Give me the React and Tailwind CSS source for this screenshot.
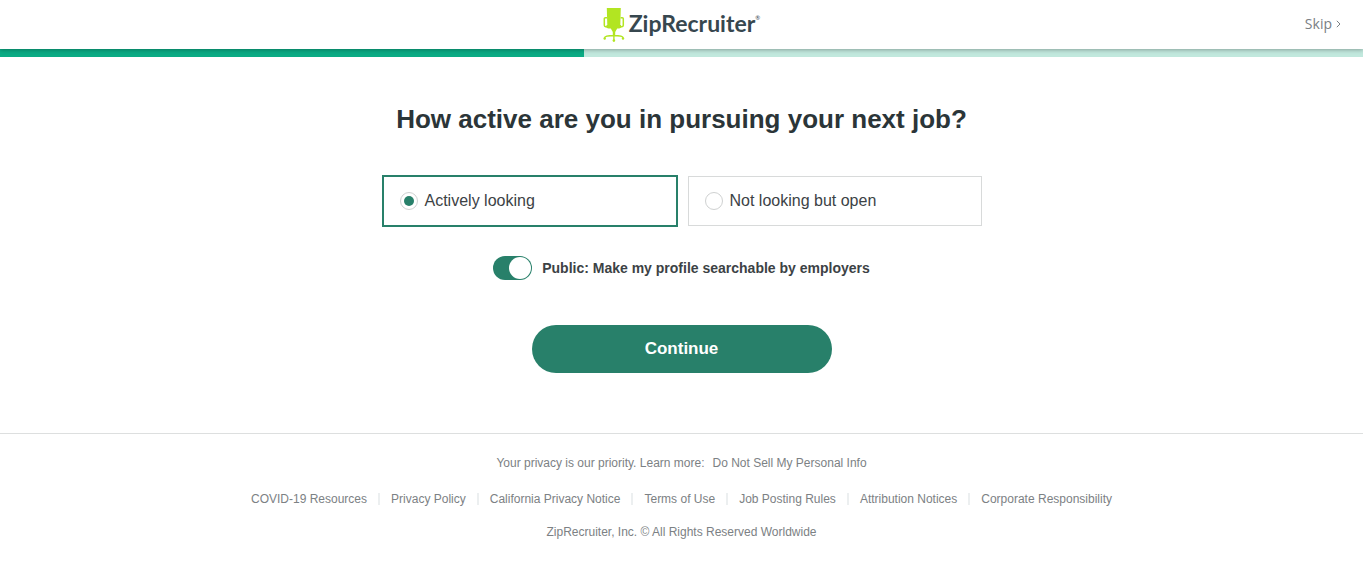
import { useState } from "react";

const ACTIVITY_OPTIONS = [
  { value: "active", label: "Actively looking" },
  { value: "open", label: "Not looking but open" },
];

const FOOTER_LINKS = [
  "COVID-19 Resources",
  "Privacy Policy",
  "California Privacy Notice",
  "Terms of Use",
  "Job Posting Rules",
  "Attribution Notices",
  "Corporate Responsibility",
];

function ChairIcon() {
  return (
    <svg width="22" height="34" viewBox="0 0 22 34" fill="none" aria-hidden="true">
      {/* Back and seat */}
      <path d="M3.8 0h14l-.5 17.5H4.3z" fill="#b2e522" />
      <path d="M3.500 17h14.600v1.800c0 1.200-.8 1.700-2 1.700h-1.900L12.200 24v4h-2.400v-4l-2-3.500H5.500c-1.200 0-2-.5-2-1.700z" fill="#b2e522" />
      {/* Armrests */}
      <path d="M4 9.700H2.300c-.6 0-1 .4-1 1v6.600c0 .9.600 1.400 1.400 1.500l2.300.3M17.600 9.700h1.700c.6 0 1 .4 1 1v6.600c0 .9-.6 1.400-1.400 1.500l-2.300.3" stroke="#b2e522" strokeWidth="1.500" />
      {/* Base and wheels */}
      <path d="M1.500 29.800c.2-1.700 5-2.300 9.300-2.300s9.200.6 9.400 2.300M10.900 26v6" stroke="#b2e522" strokeWidth="1.400" />
      <circle cx="1.700" cy="30.500" r="1.200" fill="#b2e522" />
      <circle cx="20" cy="30.500" r="1.200" fill="#b2e522" />
      <circle cx="10.900" cy="32.600" r="1.300" fill="#b2e522" />
    </svg>
  );
}

export default function App() {
  const [activity, setActivity] = useState("active");
  const [isPublic, setIsPublic] = useState(true);

  return (
    <div className="min-h-screen bg-white font-['Liberation_Sans',Arial,sans-serif] text-[#3c4245]">

      {/* Header */}
      <header className="relative grid grid-cols-[1fr_auto_1fr] items-center h-[49px] px-[22px] bg-white shadow-[0_1px_4px_rgba(0,0,0,0.3)]">
        <a href="#" className="col-start-2 flex items-start gap-1">
          <ChairIcon />
          <span className="flex items-start font-['Lato',sans-serif] font-bold text-[23px] leading-[30px] text-[#37474f]">
            ZipRecruiter
            <span className="text-[6px] leading-5 font-normal">®</span>
          </span>
        </a>
        <a href="#" className="justify-self-end flex items-center gap-1 pb-0.5 font-['Open_Sans',sans-serif] text-sm text-[#7a8084]">
          Skip
          <svg width="5" height="8" viewBox="0 0 5 8" fill="none" stroke="currentColor" aria-hidden="true">
            <path d="M.8.800 4 4 .8 7.200" />
          </svg>
        </a>
      </header>

      {/* Progress */}
      <div className="h-2 bg-[#c1e8dd]">
        <div className="h-full bg-[#0bab84]" style={{ width: `${(3 / 7) * 100}%` }} />
      </div>

      <main className="flex flex-col items-center px-4 pt-[46px] pb-[60px]">
        <h1 className="font-bold text-[26px] leading-8 text-center text-[#2b3538]">
          How active are you in pursuing your next job?
        </h1>

        <div className="flex items-center gap-[10px] w-full max-w-[600px] mt-10">
          {ACTIVITY_OPTIONS.map((option) => (
            <label
              key={option.value}
              className={`flex flex-1 items-center gap-[7px] px-4 py-3 text-base leading-6 cursor-pointer ${
                activity === option.value
                  ? "border-2 border-[#28806a]"
                  : "border border-[#d8dada]"
              }`}
            >
              <input
                type="radio"
                name="activity"
                value={option.value}
                checked={activity === option.value}
                onChange={() => setActivity(option.value)}
                className="appearance-none shrink-0 size-[18px] rounded-full border border-[#cfd1d1] bg-white bg-clip-content p-[3px] checked:bg-[#28806a]"
              />
              {option.label}
            </label>
          ))}
        </div>

        <label className="flex items-center gap-[10px] mt-[29px] text-sm font-bold cursor-pointer">
          <input
            type="checkbox"
            checked={isPublic}
            onChange={(e) => setIsPublic(e.target.checked)}
            className="appearance-none flex shrink-0 w-[39px] h-6 p-px rounded-full bg-[#b5babc] checked:bg-[#28806a] checked:justify-end before:size-[22px] before:rounded-full before:bg-white"
          />
          Public: Make my profile searchable by employers
        </label>

        <button
          type="button"
          className="w-full max-w-[300px] h-12 mt-[45px] rounded-full bg-[#28806a] text-white text-[17px] font-bold cursor-pointer"
        >
          Continue
        </button>
      </main>

      {/* Footer */}
      <footer className="flex flex-col items-center px-4 pt-[21px] pb-8 border-t border-[#dddfdf] text-xs leading-4 text-[#7c8184]">
        <p className="flex gap-2">
          Your privacy is our priority. Learn more:
          <a href="#">Do Not Sell My Personal Info</a>
        </p>
        <ul className="flex flex-wrap justify-center items-center mt-5">
          {FOOTER_LINKS.map((link) => (
            <li key={link} className="flex items-center after:w-0.5 after:h-3 after:mx-[11px] after:bg-[#eceff0] last:after:hidden">
              <a href="#">{link}</a>
            </li>
          ))}
        </ul>
        <p className="mt-[17px]">ZipRecruiter, Inc. © All Rights Reserved Worldwide</p>
      </footer>
    </div>
  );
}
